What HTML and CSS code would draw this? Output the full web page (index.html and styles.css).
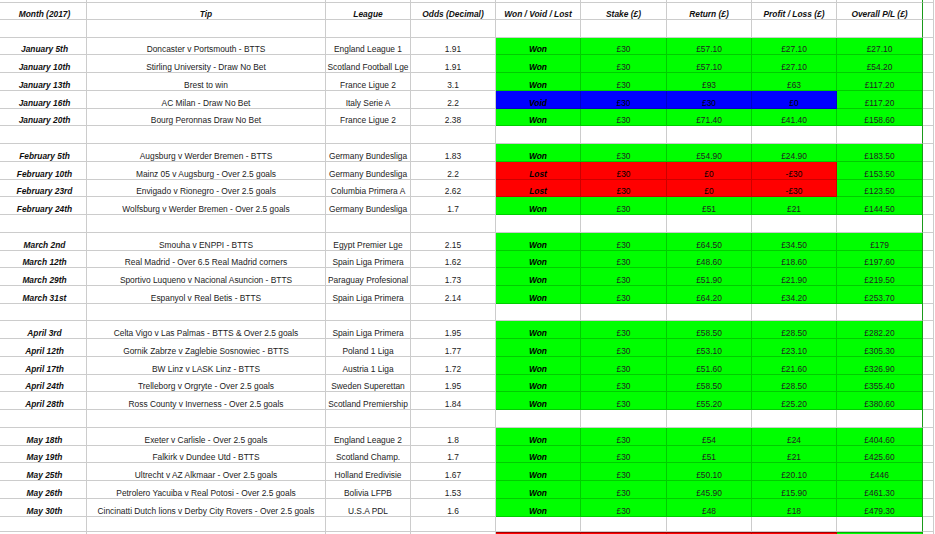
FILE: index.html
```html
<!DOCTYPE html>
<html>
<head>
<meta charset="utf-8">
<link rel="stylesheet" href="styles.css">
</head>
<body>
<div class="sheet">
  <div class="row top"><div class="c"></div><div class="c"></div><div class="c"></div><div class="c"></div><div class="c"></div><div class="c"></div><div class="c"></div><div class="c"></div><div class="c"></div></div>
  <div class="row head"><div class="c">Month (2017)</div><div class="c">Tip</div><div class="c">League</div><div class="c">Odds (Decimal)</div><div class="c">Won / Void / Lost</div><div class="c">Stake (£)</div><div class="c">Return (£)</div><div class="c">Profit / Loss (£)</div><div class="c">Overall P/L (£)</div></div>
  <div class="row"><div class="c"></div><div class="c"></div><div class="c"></div><div class="c"></div><div class="c"></div><div class="c"></div><div class="c"></div><div class="c"></div><div class="c"></div></div>

  <div class="row won"><div class="c">January 5th</div><div class="c">Doncaster v Portsmouth - BTTS</div><div class="c">England League 1</div><div class="c">1.91</div><div class="c">Won</div><div class="c">£30</div><div class="c">£57.10</div><div class="c">£27.10</div><div class="c">£27.10</div></div>
  <div class="row won"><div class="c">January 10th</div><div class="c">Stirling University - Draw No Bet</div><div class="c">Scotland Football Lge</div><div class="c">1.91</div><div class="c">Won</div><div class="c">£30</div><div class="c">£57.10</div><div class="c">£27.10</div><div class="c">£54.20</div></div>
  <div class="row won"><div class="c">January 13th</div><div class="c">Brest to win</div><div class="c">France Ligue 2</div><div class="c">3.1</div><div class="c">Won</div><div class="c">£30</div><div class="c">£93</div><div class="c">£63</div><div class="c">£117.20</div></div>
  <div class="row void"><div class="c">January 16th</div><div class="c">AC Milan - Draw No Bet</div><div class="c">Italy Serie A</div><div class="c">2.2</div><div class="c">Void</div><div class="c">£30</div><div class="c">£30</div><div class="c">£0</div><div class="c">£117.20</div></div>
  <div class="row won"><div class="c">January 20th</div><div class="c">Bourg Peronnas Draw No Bet</div><div class="c">France Ligue 2</div><div class="c">2.38</div><div class="c">Won</div><div class="c">£30</div><div class="c">£71.40</div><div class="c">£41.40</div><div class="c">£158.60</div></div>
  <div class="row"><div class="c"></div><div class="c"></div><div class="c"></div><div class="c"></div><div class="c"></div><div class="c"></div><div class="c"></div><div class="c"></div><div class="c"></div></div>

  <div class="row won"><div class="c">February 5th</div><div class="c">Augsburg v Werder Bremen - BTTS</div><div class="c">Germany Bundesliga</div><div class="c">1.83</div><div class="c">Won</div><div class="c">£30</div><div class="c">£54.90</div><div class="c">£24.90</div><div class="c">£183.50</div></div>
  <div class="row lost"><div class="c">February 10th</div><div class="c">Mainz 05 v Augsburg - Over 2.5 goals</div><div class="c">Germany Bundesliga</div><div class="c">2.2</div><div class="c">Lost</div><div class="c">£30</div><div class="c">£0</div><div class="c">-£30</div><div class="c">£153.50</div></div>
  <div class="row lost"><div class="c">February 23rd</div><div class="c">Envigado v Rionegro - Over 2.5 goals</div><div class="c">Columbia Primera A</div><div class="c">2.62</div><div class="c">Lost</div><div class="c">£30</div><div class="c">£0</div><div class="c">-£30</div><div class="c">£123.50</div></div>
  <div class="row won"><div class="c">February 24th</div><div class="c">Wolfsburg v Werder Bremen - Over 2.5 goals</div><div class="c">Germany Bundesliga</div><div class="c">1.7</div><div class="c">Won</div><div class="c">£30</div><div class="c">£51</div><div class="c">£21</div><div class="c">£144.50</div></div>
  <div class="row"><div class="c"></div><div class="c"></div><div class="c"></div><div class="c"></div><div class="c"></div><div class="c"></div><div class="c"></div><div class="c"></div><div class="c"></div></div>

  <div class="row won"><div class="c">March 2nd</div><div class="c">Smouha v ENPPI - BTTS</div><div class="c">Egypt Premier Lge</div><div class="c">2.15</div><div class="c">Won</div><div class="c">£30</div><div class="c">£64.50</div><div class="c">£34.50</div><div class="c">£179</div></div>
  <div class="row won"><div class="c">March 12th</div><div class="c">Real Madrid - Over 6.5 Real Madrid corners</div><div class="c">Spain Liga Primera</div><div class="c">1.62</div><div class="c">Won</div><div class="c">£30</div><div class="c">£48.60</div><div class="c">£18.60</div><div class="c">£197.60</div></div>
  <div class="row won"><div class="c">March 29th</div><div class="c">Sportivo Luqueno v Nacional Asuncion - BTTS</div><div class="c">Paraguay Profesional</div><div class="c">1.73</div><div class="c">Won</div><div class="c">£30</div><div class="c">£51.90</div><div class="c">£21.90</div><div class="c">£219.50</div></div>
  <div class="row won"><div class="c">March 31st</div><div class="c">Espanyol v Real Betis - BTTS</div><div class="c">Spain Liga Primera</div><div class="c">2.14</div><div class="c">Won</div><div class="c">£30</div><div class="c">£64.20</div><div class="c">£34.20</div><div class="c">£253.70</div></div>
  <div class="row"><div class="c"></div><div class="c"></div><div class="c"></div><div class="c"></div><div class="c"></div><div class="c"></div><div class="c"></div><div class="c"></div><div class="c"></div></div>

  <div class="row won"><div class="c">April 3rd</div><div class="c">Celta Vigo v Las Palmas - BTTS &amp; Over 2.5 goals</div><div class="c">Spain Liga Primera</div><div class="c">1.95</div><div class="c">Won</div><div class="c">£30</div><div class="c">£58.50</div><div class="c">£28.50</div><div class="c">£282.20</div></div>
  <div class="row won"><div class="c">April 12th</div><div class="c">Gornik Zabrze v Zaglebie Sosnowiec - BTTS</div><div class="c">Poland 1 Liga</div><div class="c">1.77</div><div class="c">Won</div><div class="c">£30</div><div class="c">£53.10</div><div class="c">£23.10</div><div class="c">£305.30</div></div>
  <div class="row won"><div class="c">April 17th</div><div class="c">BW Linz v LASK Linz - BTTS</div><div class="c">Austria 1 Liga</div><div class="c">1.72</div><div class="c">Won</div><div class="c">£30</div><div class="c">£51.60</div><div class="c">£21.60</div><div class="c">£326.90</div></div>
  <div class="row won"><div class="c">April 24th</div><div class="c">Trelleborg v Orgryte - Over 2.5 goals</div><div class="c">Sweden Superettan</div><div class="c">1.95</div><div class="c">Won</div><div class="c">£30</div><div class="c">£58.50</div><div class="c">£28.50</div><div class="c">£355.40</div></div>
  <div class="row won"><div class="c">April 28th</div><div class="c">Ross County v Inverness - Over 2.5 goals</div><div class="c">Scotland Premiership</div><div class="c">1.84</div><div class="c">Won</div><div class="c">£30</div><div class="c">£55.20</div><div class="c">£25.20</div><div class="c">£380.60</div></div>
  <div class="row"><div class="c"></div><div class="c"></div><div class="c"></div><div class="c"></div><div class="c"></div><div class="c"></div><div class="c"></div><div class="c"></div><div class="c"></div></div>

  <div class="row won"><div class="c">May 18th</div><div class="c">Exeter v Carlisle - Over 2.5 goals</div><div class="c">England League 2</div><div class="c">1.8</div><div class="c">Won</div><div class="c">£30</div><div class="c">£54</div><div class="c">£24</div><div class="c">£404.60</div></div>
  <div class="row won"><div class="c">May 19th</div><div class="c">Falkirk v Dundee Utd - BTTS</div><div class="c">Scotland Champ.</div><div class="c">1.7</div><div class="c">Won</div><div class="c">£30</div><div class="c">£51</div><div class="c">£21</div><div class="c">£425.60</div></div>
  <div class="row won"><div class="c">May 25th</div><div class="c">Ultrecht v AZ Alkmaar - Over 2.5 goals</div><div class="c">Holland Eredivisie</div><div class="c">1.67</div><div class="c">Won</div><div class="c">£30</div><div class="c">£50.10</div><div class="c">£20.10</div><div class="c">£446</div></div>
  <div class="row won"><div class="c">May 26th</div><div class="c">Petrolero Yacuiba v Real Potosi - Over 2.5 goals</div><div class="c">Bolivia LFPB</div><div class="c">1.53</div><div class="c">Won</div><div class="c">£30</div><div class="c">£45.90</div><div class="c">£15.90</div><div class="c">£461.30</div></div>
  <div class="row won"><div class="c">May 30th</div><div class="c">Cincinatti Dutch lions v Derby City Rovers - Over 2.5 goals</div><div class="c">U.S.A PDL</div><div class="c">1.6</div><div class="c">Won</div><div class="c">£30</div><div class="c">£48</div><div class="c">£18</div><div class="c">£479.30</div></div>
  <div class="row last-blank"><div class="c"></div><div class="c"></div><div class="c"></div><div class="c"></div><div class="c"></div><div class="c"></div><div class="c"></div><div class="c"></div><div class="c"></div></div>
  <div class="row lost total"><div class="c"></div><div class="c"></div><div class="c"></div><div class="c"></div><div class="c"></div><div class="c"></div><div class="c"></div><div class="c"></div><div class="c"></div></div>
</div>
</body>
</html>
```

FILE: styles.css
```css
html, body {
  margin: 0;
  padding: 0;
  background: #ffffff;
  overflow: hidden;
}

.sheet {
  width: 935px;
  height: 534px;
  overflow: hidden;
  font-family: "Liberation Sans", Arial, sans-serif;
  font-size: 8.4px;
  color: #222222;
}

.row {
  display: grid;
  grid-template-columns: 87px 239px 85px 85px 85px 86px 85px 85px 86px 11px 1fr;
  height: 17.74px;
}

.row::after {
  content: "";
  border-right: 1px solid rgba(0, 0, 0, 0.2);
  border-bottom: 1px solid rgba(0, 0, 0, 0.2);
}

.row.top { height: 3px; }
.row.head { height: 17px; }
.row.last-blank { height: 15.8px; }
.row.total { height: 20px; }

.c {
  box-sizing: border-box;
  border-right: 1px solid rgba(0, 0, 0, 0.2);
  border-bottom: 1px solid rgba(0, 0, 0, 0.2);
  display: flex;
  align-items: flex-end;
  justify-content: center;
  line-height: 10px;
  white-space: nowrap;
  overflow: hidden;
  min-width: 0;
}

.c:nth-child(1) {
  padding-left: 3px;
  font-weight: bold;
  font-style: italic;
  color: #111111;
}

.c:nth-child(9) {
  border-right: 1px solid #1a9a1a;
}

.head .c {
  font-weight: bold;
  font-style: italic;
  color: #111111;
}

.won .c:nth-child(5),
.lost .c:nth-child(5),
.void .c:nth-child(5) {
  font-weight: bold;
  font-style: italic;
  color: #000000;
}

.won .c:nth-child(n+5) { background: #00ff00; }

.void .c:nth-child(n+5) { background: #0000ff; color: #000000; }
.void .c:nth-child(9) { background: #00ff00; color: #222222; }

.lost .c:nth-child(n+5) { background: #ff0000; color: #000000; }
.lost .c:nth-child(9) { background: #00ff00; color: #222222; }

.total .c:nth-child(n+5) { border-top: 1px solid #a00000; }
.total .c:nth-child(9) { border-top-color: #00b000; }
```
